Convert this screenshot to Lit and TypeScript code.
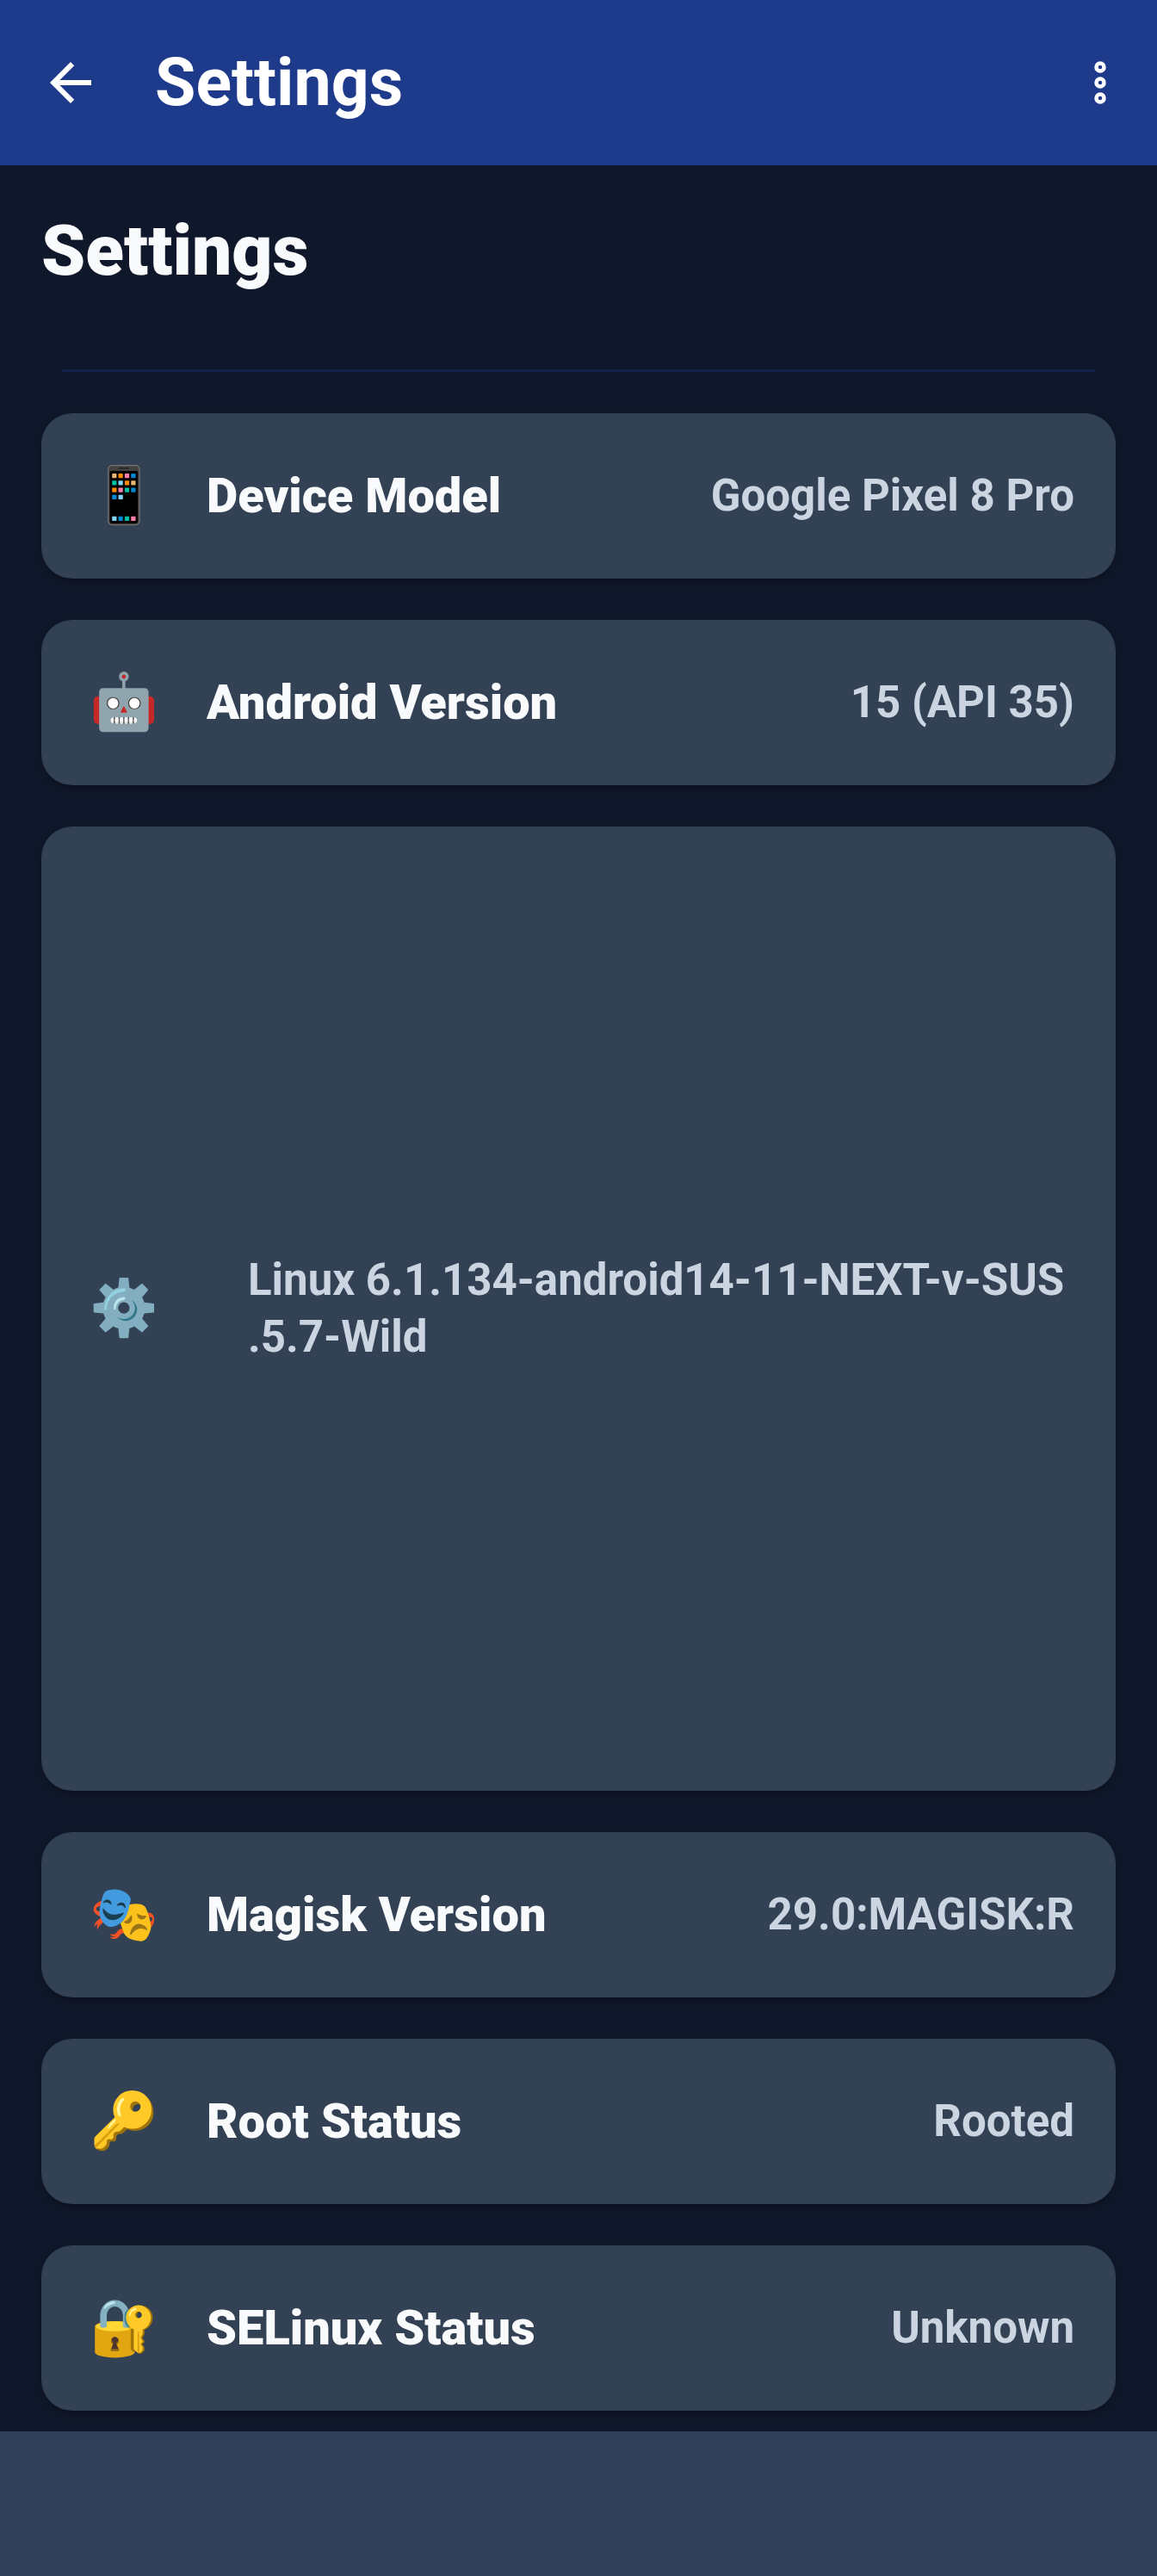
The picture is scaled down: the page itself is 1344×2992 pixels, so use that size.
import { LitElement, html, css } from "lit";
import { customElement, property } from "lit/decorators.js";

interface Setting {
  icon: string;
  label: string;
  value: string[];
  fill?: boolean;
}

const SETTINGS: Setting[] = [
  { icon: "📱", label: "Device Model", value: ["Google Pixel 8 Pro"] },
  { icon: "🤖", label: "Android Version", value: ["15 (API 35)"] },
  { icon: "⚙️", label: "", value: ["Linux 6.1.134-android14-11-NEXT-v-SUS", ".5.7-Wild"], fill: true },
  { icon: "🎭", label: "Magisk Version", value: ["29.0:MAGISK:R"] },
  { icon: "🔑", label: "Root Status", value: ["Rooted"] },
  { icon: "🔐", label: "SELinux Status", value: ["Unknown"] },
];

@customElement("setting-card")
export class SettingCard extends LitElement {
  @property({ attribute: false }) item!: Setting;

  static styles = css`
    :host {
      display: flex;
      align-items: center;
      box-sizing: border-box;
      min-height: 192px;
      padding: 48px;
      border-radius: 36px;
      background: #334155;
      box-shadow: 0 4px 10px rgba(0, 0, 0, 0.25);
    }
    .icon {
      display: flex;
      justify-content: center;
      flex: none;
      width: 96px;
      font: 64px/72px "Noto Color Emoji", sans-serif;
    }
    .label {
      margin-left: 48px;
      font-size: 56px;
      line-height: 72px;
      font-weight: 900;
      color: #f8fafc;
    }
    .value {
      flex: 1;
      margin-left: 48px;
      font-size: 51px;
      line-height: 66px;
      font-weight: 700;
      text-align: right;
      color: #cbd5e1;
    }
    .value.long {
      margin-left: 96px;
      text-align: left;
    }
    .line {
      display: block;
      white-space: nowrap;
    }
  `;

  render() {
    const { icon, label, value, fill } = this.item;
    return html`
      <span class="icon" aria-hidden="true">${icon}</span>
      ${label ? html`<span class="label">${label}</span>` : null}
      <span class="value ${fill ? "long" : ""}">
        ${value.map((line) => html`<span class="line">${line}</span>`)}
      </span>
    `;
  }
}

@customElement("app-root")
export class AppRoot extends LitElement {
  static styles = css`
    :host {
      display: flex;
      flex-direction: column;
      min-height: 100vh;
      background: #0f172a;
      font-family: Roboto, "Liberation Sans", sans-serif;
    }
    .bar {
      display: flex;
      align-items: center;
      height: 192px;
      padding: 0 30px 0 46px;
      background: #1e3a8a;
      color: #fff;
    }
    .bar button {
      display: flex;
      padding: 0;
      border: 0;
      background: none;
      color: inherit;
    }
    .bar svg {
      width: 72px;
      height: 72px;
    }
    .title {
      flex: 1;
      margin-left: 62px;
      font-size: 77px;
      line-height: 96px;
      font-weight: 700;
    }
    main {
      flex: 1;
      display: flex;
      flex-direction: column;
      padding: 48px 48px 24px;
    }
    h1 {
      margin: 0;
      font-size: 82px;
      line-height: 102px;
      font-weight: 900;
      color: #f8fafc;
    }
    hr {
      width: calc(100% - 48px);
      height: 3px;
      margin: 87px auto 48px;
      border: 0;
      background: #14224a;
    }
    .list {
      flex: 1;
      display: flex;
      flex-direction: column;
      gap: 48px;
    }
    .fill {
      flex: 1;
    }
    .nav {
      height: 168px;
      background: #30405a;
    }
  `;

  render() {
    return html`
      <header class="bar">
        <button aria-label="Back">
          <svg viewBox="0 0 24 24" fill="currentColor">
            <path d="M20 11H7.83l5.59-5.59L12 4l-8 8 8 8 1.41-1.41L7.83 13H20z" />
          </svg>
        </button>
        <span class="title">Settings</span>
        <button aria-label="More options">
          <svg viewBox="0 0 24 24" fill="none" stroke="currentColor" stroke-width="1.5">
            <circle cx="12" cy="6" r="1.5" />
            <circle cx="12" cy="12" r="1.5" />
            <circle cx="12" cy="18" r="1.5" />
          </svg>
        </button>
      </header>
      <main>
        <h1>Settings</h1>
        <hr />
        <div class="list">
          ${SETTINGS.map((s) => html`<setting-card class=${s.fill ? "fill" : ""} .item=${s}></setting-card>`)}
        </div>
      </main>
      <footer class="nav"></footer>
    `;
  }
}
